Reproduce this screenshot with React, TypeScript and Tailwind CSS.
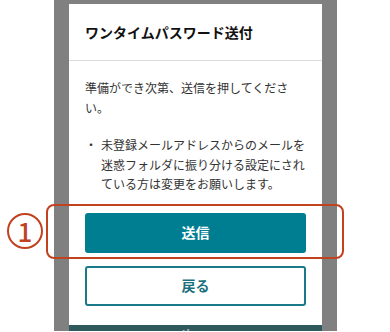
import React from "react";

const font = { fontFamily: '"Noto Sans CJK JP", "Noto Sans", sans-serif' };

export default function App() {
  return (
    <div className="relative h-[332px] w-[390px] overflow-hidden bg-white" style={font}>
      {/* phone screen under overlay */}
      <div className="ml-[54px] flex h-[331px] w-[283px] flex-col overflow-hidden bg-[#808080] px-[15px] pt-[4px]">
        <div className="bg-white">
          <div className="flex h-[57px] items-center border-b border-[#dcdcdc] px-4">
            <h1 className="text-[14px] font-bold text-[#111]">ワンタイムパスワード送付</h1>
          </div>
          <div className="px-4 pt-[17px] pb-[19px] text-[12px] leading-[19.5px] text-[#333]">
            <p>準備ができ次第、送信を押してください。</p>
            <div className="mt-[18px] flex">
              <span className="w-[16px] shrink-0">・</span>
              <p>未登録メールアドレスからのメールを迷惑フォルダに振り分ける設定にされている方は変更をお願いします。</p>
            </div>
            <div className="mt-[19px] flex flex-col gap-[13px]">
              <button className="h-[40px] w-full rounded-[3px] bg-[#007e91] text-[14px] font-bold text-white">
                送信
              </button>
              <button className="h-[40px] w-full rounded-[3px] border-2 border-[#1a7a89] bg-white text-[14px] font-bold text-[#1a6f7d]">
                戻る
              </button>
            </div>
          </div>
        </div>
        <div className="h-[40px] bg-[#2e5a5e] text-center text-[14px] font-bold leading-[20px] text-[#a9b4b5]">
          次へ
        </div>
      </div>

      {/* annotation */}
      <div className="absolute left-[46px] top-[204px] h-[55px] w-[298px] rounded-[8px] border-2 border-[#c0421f]" />
      <div className="absolute left-[7px] top-[213px] flex h-[36px] w-[36px] items-center justify-center rounded-full border-2 border-[#c0421f] text-[26px] font-medium leading-none text-[#c0421f]">
        1
      </div>
    </div>
  );
}
